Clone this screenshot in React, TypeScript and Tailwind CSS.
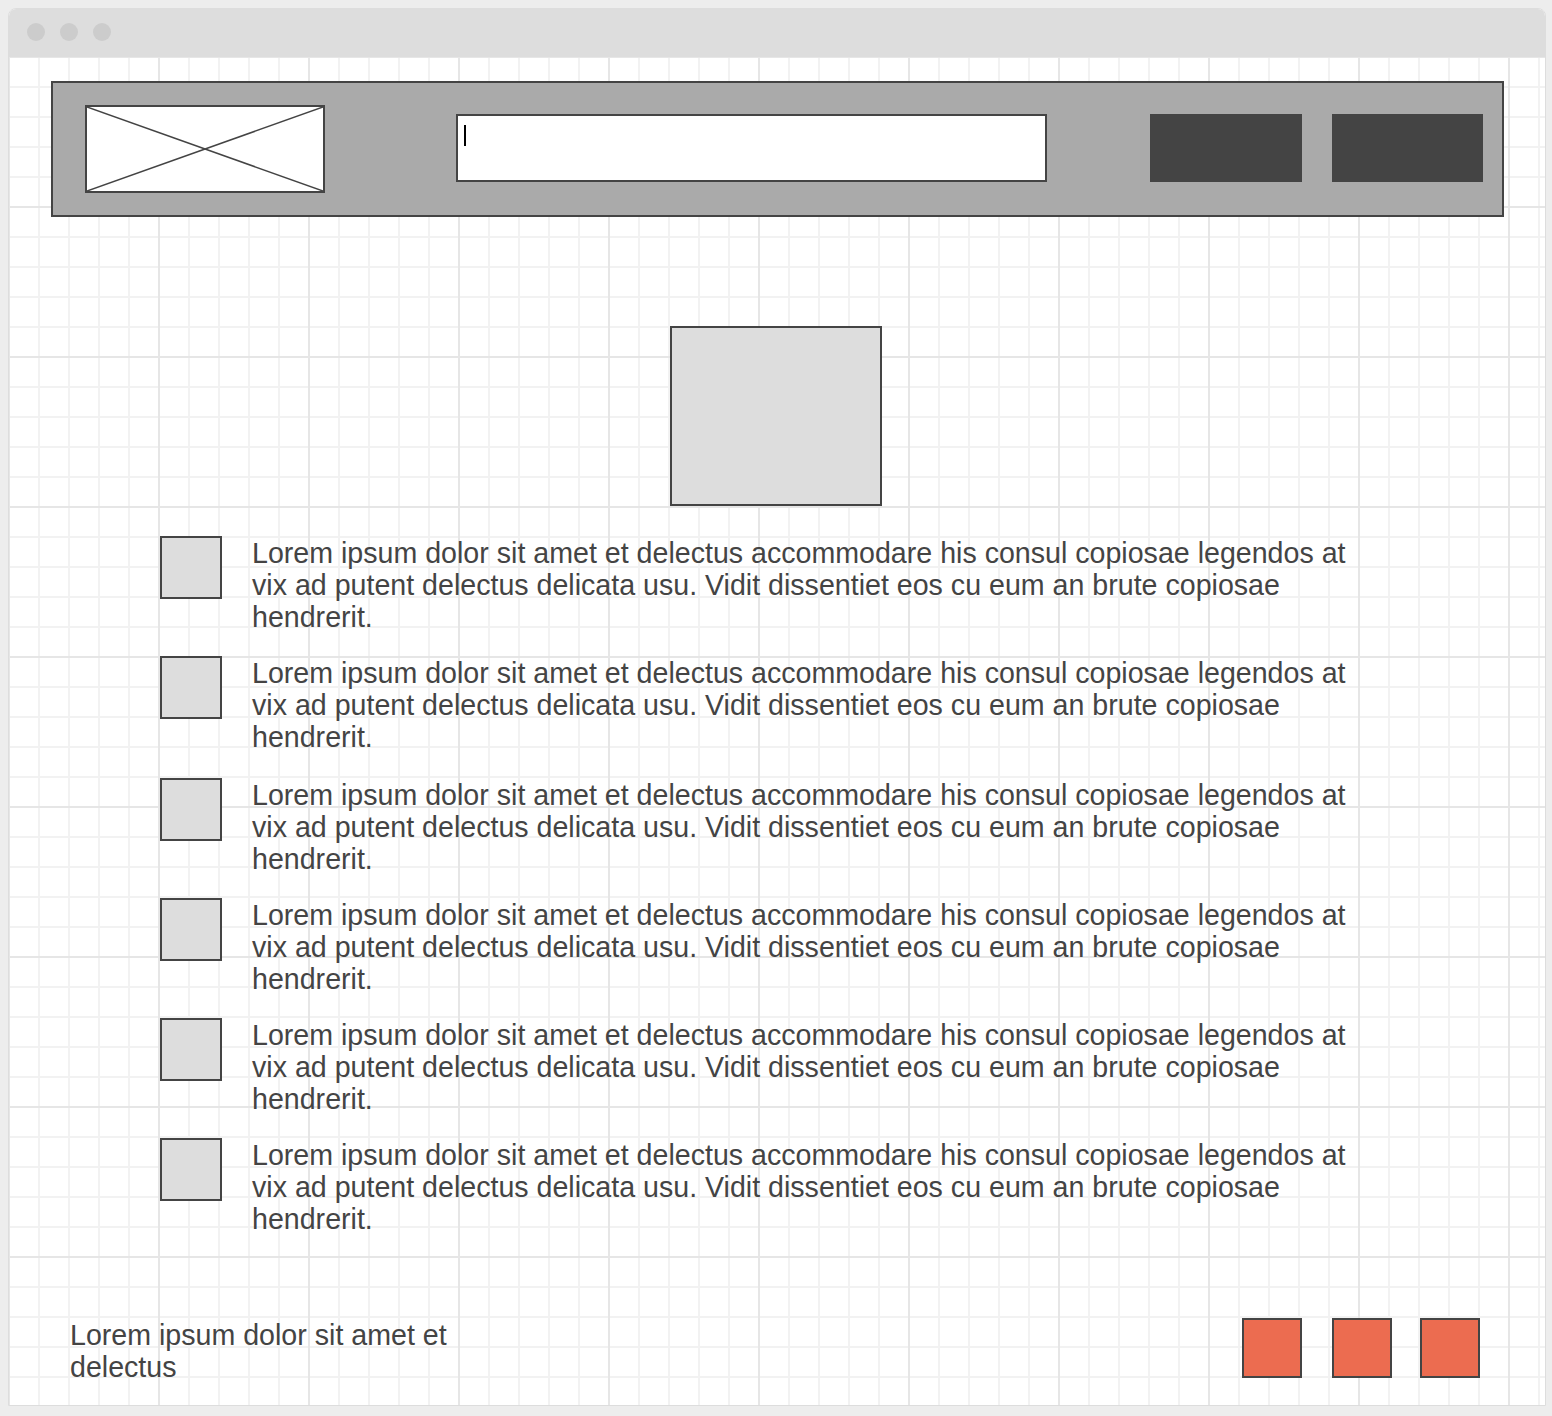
const items = [0, 1, 2, 3, 4, 5];

const lorem =
  "Lorem ipsum dolor sit amet et delectus accommodare his consul copiosae legendos at vix ad putent delectus delicata usu. Vidit dissentiet eos cu eum an brute copiosae hendrerit.";

export default function App() {
  return (
    <div className="w-[1552px] h-[1416px] bg-[#ededed] pt-2 pl-2 font-['Liberation_Sans',Arial,sans-serif] text-[#444444]">
      {/* Browser window */}
      <div className="flex h-[1398px] w-[1538px] flex-col overflow-hidden rounded-t-[8px] border border-[#dddddd] bg-white">
        {/* Title bar */}
        <div className="flex h-[48px] shrink-0 items-center gap-[15px] bg-[#dddddd] pb-[2px] pl-[18px]">
          <div className="h-[18px] w-[18px] rounded-full bg-[#cccccc]" />
          <div className="h-[18px] w-[18px] rounded-full bg-[#cccccc]" />
          <div className="h-[18px] w-[18px] rounded-full bg-[#cccccc]" />
        </div>

        {/* Page with grid */}
        <div className="flex flex-1 flex-col bg-[linear-gradient(to_right,#e6e6e6_2px,transparent_2px),linear-gradient(to_bottom,#e6e6e6_2px,transparent_2px),linear-gradient(to_right,#f2f2f2_2px,transparent_2px),linear-gradient(to_bottom,#f2f2f2_2px,transparent_2px)] bg-[length:150px_150px,150px_150px,30px_30px,30px_30px] bg-[position:-1px_-1px]">
          {/* Header */}
          <div className="ml-[42px] mt-[24px] flex h-[136px] w-[1453px] items-center border-2 border-[#444444] bg-[#aaaaaa] pl-[32px]">
            <div className="h-[88px] w-[240px] shrink-0 border-2 border-[#444444] bg-white">
              <svg className="h-full w-full" viewBox="0 0 236 84" preserveAspectRatio="none">
                <line x1="0" y1="0" x2="236" y2="84" stroke="#444444" strokeWidth="1.5" />
                <line x1="236" y1="0" x2="0" y2="84" stroke="#444444" strokeWidth="1.5" />
              </svg>
            </div>
            <div className="ml-[131px] mb-[2px] h-[68px] w-[591px] shrink-0 border-2 border-[#444444] bg-white pl-[6px] pt-[9px]">
              <div className="h-[21px] w-[2px] bg-black" />
            </div>
            <div className="ml-[103px] mb-[2px] h-[68px] w-[152px] shrink-0 bg-[#444444]" />
            <div className="ml-[30px] mb-[2px] h-[68px] w-[151px] shrink-0 bg-[#444444]" />
          </div>

          {/* Hero image */}
          <div className="ml-[661px] mt-[109px] h-[180px] w-[212px] border-2 border-[#444444] bg-[#dddddd]" />

          {/* List */}
          <div className="mt-[30px] flex flex-col gap-[23px] pl-[151px]">
            {items.map((i) => (
              <div key={i} className={i === 2 ? "mt-[2px] flex gap-[30px]" : "flex gap-[30px]"}>
                <div className="h-[63px] w-[62px] shrink-0 border-2 border-[#444444] bg-[#dddddd]" />
                <p className="mt-[1px] w-[1110px] text-[28.6px] leading-[32px]">{lorem}</p>
              </div>
            ))}
          </div>

          {/* Footer */}
          <div className="mt-auto flex items-start justify-between pb-[22px] pl-[61px] pr-[65px]">
            <p className="mt-[1px] w-[400px] text-[28.6px] leading-[32px]">Lorem ipsum dolor sit amet et delectus</p>
            <div className="flex gap-[30px]">
              <div className="h-[60px] w-[60px] border-2 border-[#444444] bg-[#ec6c50]" />
              <div className="h-[60px] w-[60px] border-2 border-[#444444] bg-[#ec6c50]" />
              <div className="ml-[-2px] h-[60px] w-[60px] border-2 border-[#444444] bg-[#ec6c50]" />
            </div>
          </div>
        </div>
      </div>
    </div>
  );
}
